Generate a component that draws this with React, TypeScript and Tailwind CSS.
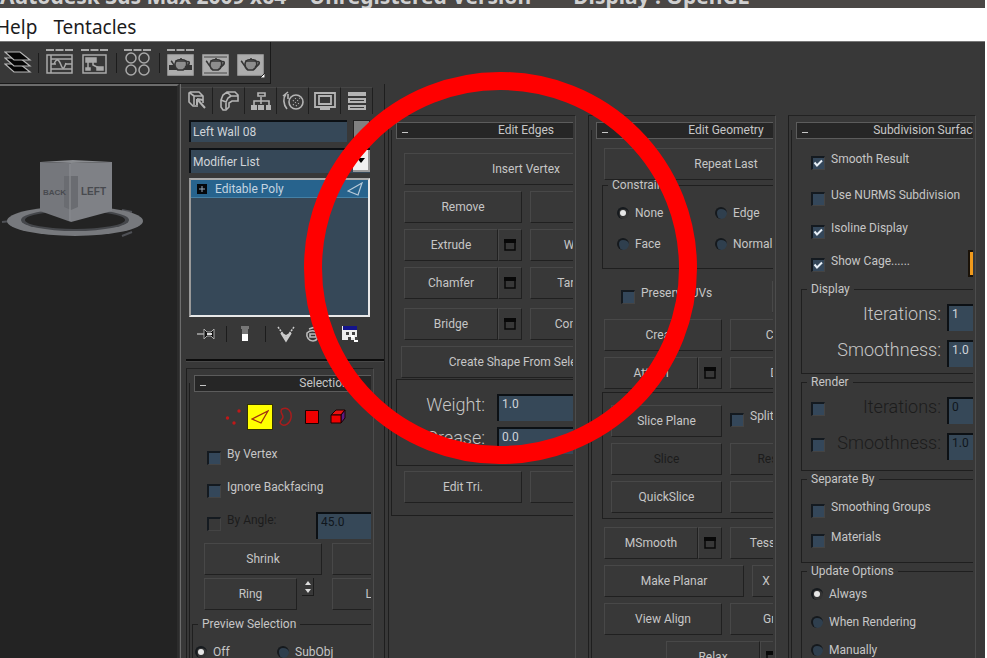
import React from 'react'
import clsx from 'clsx'

type Children = { children?: React.ReactNode }

/* ---------- basic controls ---------- */

function Btn({ children, className, disabled }: Children & { className?: string; disabled?: boolean }) {
    return (
        <button
            disabled={disabled}
            className={clsx(
                'h-8 min-w-0 whitespace-nowrap border border-t-[#484848] border-l-[#484848] border-r-[#202020] border-b-[#202020] text-center leading-4',
                disabled ? 'text-[#1c1c1c]' : 'text-[#c6c6c6]',
                className
            )}
        >
            {children}
        </button>
    )
}

function SettingsBtn() {
    return (
        <Btn className="flex w-6 shrink-0 items-center justify-center">
            <svg width="12" height="12" viewBox="0 0 12 12" aria-hidden="true">
                <path d="M1 1h10v10H1z" fill="none" stroke="#080808" strokeWidth="1.5" />
                <path d="M0 0h12v4H0z" fill="#080808" />
            </svg>
        </Btn>
    )
}

function WithSettings({ children }: Children) {
    return (
        <div className="flex">
            <Btn className="flex-1">{children}</Btn>
            <SettingsBtn />
        </div>
    )
}

function Row({ children }: Children) {
    return <div className="grid grid-cols-2 gap-2 px-2">{children}</div>
}

function Box({ label, checked, disabled }: { label?: string; checked?: boolean; disabled?: boolean }) {
    return (
        <label className={clsx('flex h-5 items-start gap-[6px] whitespace-nowrap leading-4', disabled ? 'text-[#1c1c1c]' : 'text-[#c6c6c6]')}>
            <span className="relative mt-[5px] h-[14px] w-[14px] shrink-0">
                <input
                    type="checkbox"
                    defaultChecked={checked}
                    disabled={disabled}
                    aria-label={label ? undefined : 'Use render value'}
                    className={clsx(
                        'peer block h-[14px] w-[14px] appearance-none border border-t-2 border-l-2 border-t-[#141a20] border-l-[#141a20] border-r-[#444] border-b-[#444]',
                        disabled && label ? 'bg-[#383838]' : 'bg-[#34475a]'
                    )}
                />
                <svg className="pointer-events-none absolute inset-0 hidden peer-checked:block" width="14" height="14" viewBox="0 0 14 14" aria-hidden="true">
                    <path d="M3.5 6.5l2.500 3 5-5" fill="none" stroke="#e8f0f8" strokeWidth="2" />
                </svg>
            </span>
            {label}
        </label>
    )
}

function Radio({ label, name, checked }: { label: string; name: string; checked?: boolean }) {
    return (
        <label className="flex h-5 items-center gap-[6px] whitespace-nowrap">
            <span className="relative h-3 w-3 shrink-0">
                <input
                    type="radio"
                    name={name}
                    defaultChecked={checked}
                    className="peer block h-3 w-3 appearance-none rounded-full border-t-2 border-l-2 border-t-[#15191d] border-l-[#15191d] bg-[#2f3f4e] checked:bg-[#333]"
                />
                <span className="pointer-events-none absolute top-[3px] left-[3px] hidden h-[6px] w-[6px] rounded-full bg-[#e6e6e6] peer-checked:block" />
            </span>
            {label}
        </label>
    )
}

function Field({ value, label, disabled, className }: { value: string; label: string; disabled?: boolean; className?: string }) {
    return (
        <input
            type="text"
            aria-label={label}
            defaultValue={value}
            disabled={disabled}
            className={clsx(
                'h-[27px] shrink-0 border-t-2 border-l-2 border-[#0c1014] bg-[#364858] pb-[10px] pl-[3px]',
                disabled ? 'text-[#10161c]' : 'text-[#d0d4d8]',
                className
            )}
        />
    )
}

function BigField({ label, value, disabled }: { label: string; value: string; disabled?: boolean }) {
    return (
        <div className="flex flex-1 items-start justify-end gap-[6px]">
            <span className={clsx('text-lg leading-5 font-light', disabled ? 'text-[#1c1c1c]' : 'text-[#c6c6c6]')}>{label}:</span>
            <Field label={label} value={value} disabled={disabled} className="w-20" />
        </div>
    )
}

/* ---------- panels ---------- */

function Group({ title, children, className }: Children & { title: string; className?: string }) {
    return (
        <fieldset className="border border-[#1f1f1f]">
            <legend className="ml-[5px] px-1 leading-4">{title}</legend>
            <div className={className}>{children}</div>
        </fieldset>
    )
}

function Rollout({ title, children, className }: Children & { title: string; className?: string }) {
    return (
        <section className="flex min-h-0 flex-1 flex-col border-t border-r border-l border-t-[#222] border-r-[#4c4c4c] border-l-[#1e1e1e]">
            <div className="mr-[2px] flex flex-col overflow-hidden">
                <div className="mt-[14px] ml-[2px] flex flex-col border-b border-l border-[#1e1e1e]">
                    <div className="-mt-2 ml-1 w-[260px]">
                        <h2 className="relative h-[17px] border border-[#5c5c5c] bg-[#262626] text-center leading-[15px]">
                            <button aria-label="Collapse" className="absolute top-[9px] left-[5px] h-px w-[6px] bg-[#c6c6c6]" />
                            {title}
                        </h2>
                        <div className={className}>{children}</div>
                    </div>
                </div>
            </div>
        </section>
    )
}

function Column({ children }: Children) {
    return <div className="flex min-w-0 flex-col pt-[31px] pr-[9px] pl-[3px]">{children}</div>
}

/* ---------- toolbar drawings ---------- */

function Tool({ label, children }: Children & { label: string }) {
    return (
        <button aria-label={label} className="shrink-0">
            <svg width="28" height="30" viewBox="0 0 28 30" fill="none" stroke="#a9a9a9" strokeWidth="1.5">
                {children}
            </svg>
        </button>
    )
}

const Sep = () => <span className="h-5 w-px shrink-0 bg-[#1c1c1c]" />
const Dashes = () => <path d="M0 2h8M9.500 2h8M19 2h8" strokeWidth="2" />

function Teapot() {
    return (
        <g stroke="#353535" fill="#8d8d8d" strokeWidth="1.6">
            <path d="M9 13h10c2 4 0 7-3 9h-5c-3-2-4-5-2-9z" />
            <path d="M8 18c-2-1-2-4-4-5M19 14c5-2 4 3-1 5M9 13c2-2 8-2 10 0M14 11v-1" fill="none" />
        </g>
    )
}

function Toolbar() {
    return (
        <div className="flex h-[43px] border-t border-[#777]">
            <div className="flex items-center border-r border-b border-[#1a1a1a] pr-[5px] pl-1">
                <Tool label="Layers">
                    <g fill="#050505" stroke="#b8b8b8" strokeWidth="1.2">
                        <path d="M1 16h15l10 8H10z" />
                        <path d="M1 10h15l10 8H10z" />
                        <path d="M1 4h15l10 8H10z" />
                    </g>
                </Tool>
                <div className="flex items-center gap-[7px] pl-[6px]">
                    <Sep />
                    <Tool label="Curve Editor">
                        <Dashes />
                        <path d="M1 7h25v18H1zM5 7v18M5 11h21M5 16h5M19 16h7M5 21h21" />
                        <path d="M8 16c3-7 5-4 7 1s3 4 5-2" />
                    </Tool>
                    <Tool label="Schematic View">
                        <Dashes />
                        <path d="M2 7h23v18H2z" />
                        <path d="M5 10h10v4H5zM5 20h4v2H5zM16 19h6v3h-6z" fill="#a9a9a9" />
                        <path d="M12 14v3l6 3M7 14v6" />
                    </Tool>
                    <Sep />
                    <Tool label="Material Editor">
                        <Dashes />
                        <circle cx="7" cy="10" r="5" />
                        <circle cx="20" cy="10" r="5" />
                        <circle cx="7" cy="22" r="5" />
                        <circle cx="20" cy="22" r="5" />
                    </Tool>
                    <Sep />
                    <Tool label="Render Setup">
                        <Dashes />
                        <path d="M1 7h25v20H1z" fill="#adadad" />
                        <path d="M2 17h5l4 4h6l4-4h4v5H2z" fill="#333" stroke="none" />
                        <Teapot />
                    </Tool>
                    <Tool label="Rendered Frame">
                        <path d="M1 7h25v20H1z" fill="#adadad" />
                        <path d="M2 9h23M2 25h23" stroke="#444" strokeWidth="1" />
                        <Teapot />
                    </Tool>
                    <Tool label="Quick Render">
                        <path d="M1 7h25v20H1z" fill="#adadad" />
                        <Teapot />
                        <path d="M28 25v5h-5z" fill="#fff" stroke="#222" strokeWidth="1" />
                    </Tool>
                </div>
            </div>
        </div>
    )
}

/* ---------- viewport ---------- */

function ViewCube() {
    return (
        <svg className="mt-[69px]" width="150" height="86" viewBox="0 0 150 86">
            <path d="M2 67l18-2M122 81l10-4M122 55l10 2" stroke="#4f5156" strokeWidth="2" />
            <ellipse cx="75" cy="66" rx="68" ry="15" fill="#77797d" />
            <ellipse cx="75" cy="65" rx="54" ry="11" fill="#45474b" />
            <ellipse cx="75" cy="65" rx="50" ry="9" fill="#232323" />
            <path d="M40 7l33-2 39 2-41 1z" fill="#8a8c90" />
            <path d="M40 7l31 1v59l-31-11z" fill="#75777c" />
            <path d="M71 8l41-1v49l-41 11z" fill="#7f8186" />
            <path d="M64 21h14v31l-7 3-7-3z" fill="#6a6c71" />
            <path d="M70 9v57" stroke="#929498" />
            <g fill="#484a4f" fontWeight="700" fontFamily="Liberation Sans, sans-serif">
                <text x="43" y="40" fontSize="8">BACK</text>
                <text x="81" y="40" fontSize="10">LEFT</text>
            </g>
        </svg>
    )
}

/* ---------- command panel ---------- */

function Tab({ label, children }: Children & { label: string }) {
    return (
        <button aria-label={label} className="flex w-8 items-center justify-center border-t border-r border-t-[#464646] border-r-[#1f1f1f]">
            <svg width="22" height="22" viewBox="0 0 22 22" fill="none" stroke="#b4b4b4" strokeWidth="2">
                {children}
            </svg>
        </button>
    )
}

function CommandPanel() {
    return (
        <div className="flex min-w-0 flex-col border-r border-l border-r-[#1e1e1e] border-l-[#6c6c6c] pt-[3px]">
            <div className="flex h-[27px]">
                <Tab label="Create">
                    <path d="M4 2h9l4 4v7M4 2L3 3v9l4 4h5M8 6h9M8 6v9M4 3l4 3" strokeWidth="1.6" />
                    <path d="M11 9l8 9M11 9v6M11 9l6 1" />
                </Tab>
                <Tab label="Modify">
                    <path d="M3 10l2-5 4-3h8l3 3v6h-6l-3 2v4l-3 3H5l-2-3zM9 2l4 4h7M3 10l5 2 2-4 3-2M8 12v7" strokeWidth="1.6" />
                </Tab>
                <Tab label="Hierarchy">
                    <path d="M8 3h7v3H8zM11 7v7M4 15v-4h15v4" strokeWidth="1.6" />
                    <path d="M2 16h4v3H2zM9 16h4v3H9zM17 16h3v3h-3z" fill="#b4b4b4" />
                </Tab>
                <Tab label="Motion">
                    <circle cx="14" cy="12" r="7" strokeWidth="1.6" />
                    <path d="M5 19C1 14 1 8 4 4M1 6l5-4M6 4v5" strokeWidth="1.6" />
                    <path d="M11 15l7-7M11 11l3-3M14 16l4-4" strokeWidth="1.2" strokeDasharray="1 2" />
                </Tab>
                <Tab label="Display">
                    <path d="M1 3h20v14H1zM5 6h12v8H5zM6 19h10" strokeWidth="1.8" />
                </Tab>
                <Tab label="Utilities">
                    <path d="M2 4h18" strokeWidth="4" />
                    <path d="M3 9h16v3H3zM3 16h16v3H3z" />
                </Tab>
            </div>

            <div className="mr-[14px] ml-2 flex flex-col">
                <div className="mt-[6px] flex h-[22px] gap-[6px]">
                    <input
                        type="text"
                        aria-label="Object name"
                        defaultValue="Left Wall 08"
                        className="min-w-0 flex-1 border-t-2 border-l-2 border-[#0c1014] bg-[#364858] pl-[2px] text-[#d0d4d8]"
                    />
                    <button aria-label="Object color" className="w-[17px] border border-[#222] bg-[#808080]" />
                </div>
                <div className="relative mt-[6px] flex">
                    <select
                        aria-label="Modifier List"
                        className="h-[25px] w-full appearance-none border-t-2 border-l-2 border-[#0c1014] bg-[#364858] pl-[2px] text-[#d0d4d8]"
                    >
                        <option>Modifier List</option>
                    </select>
                    <span className="pointer-events-none absolute top-[2px] right-0 flex h-[22px] w-[17px] items-center justify-center border-r-2 border-b-2 border-[#999] bg-[#f0f0f0]">
                        <svg width="8" height="5" viewBox="0 0 8 5" aria-hidden="true">
                            <path d="M0 0h8L4 5z" fill="#000" />
                        </svg>
                    </span>
                </div>
                <div className="mt-[5px] h-[139px] border-2 border-t-[#aaa] border-r-[#e8e8e8] border-b-[#e8e8e8] border-l-[#999] bg-[#364858]">
                    <div className="flex h-[18px] items-center border-b border-[#4580a5] bg-[#27638d] pl-[6px] text-[#c4d4e0]">
                        <svg width="10" height="10" viewBox="0 0 10 10" aria-hidden="true">
                            <path d="M0 0h10v10H0z" fill="#05080c" />
                            <path d="M5 2v6M2 5h6" stroke="#9ab" />
                        </svg>
                        <span className="flex-1 pl-2">Editable Poly</span>
                        <svg className="mr-1" width="17" height="14" viewBox="0 0 17 14" aria-hidden="true">
                            <path d="M1 9L15 1l-4 12z" fill="none" stroke="#b8cad8" strokeWidth="1.2" />
                        </svg>
                    </div>
                </div>
            </div>

            <div className="mt-1 flex h-[26px] items-center pl-4">
                <button aria-label="Pin Stack">
                    <svg width="18" height="14" viewBox="0 0 18 14">
                        <path d="M0 7h8" stroke="#aaa" strokeWidth="1.5" />
                        <path d="M7 2v10l3-3h4l3 3V2l-3 3h-4z" fill="#111" stroke="#aaa" />
                        <path d="M10 7h5" stroke="#ddd" strokeWidth="2" />
                    </svg>
                </button>
                <span className="ml-[11px] h-4 w-px bg-[#1c1c1c]" />
                <button aria-label="Show End Result" className="ml-[13px]">
                    <svg width="10" height="18" viewBox="0 0 10 18">
                        <path d="M1 1h8v3H8v5H2V4H1z" fill="#777" />
                        <path d="M2 9h6v7H2z" fill="#fff" />
                    </svg>
                </button>
                <span className="ml-[15px] h-4 w-px bg-[#1c1c1c]" />
                <button aria-label="Make Unique" className="ml-[11px]">
                    <svg width="18" height="18" viewBox="0 0 18 18" fill="none" stroke="#ccc" strokeWidth="1.5">
                        <path d="M1 2l5 7M17 2l-5 7" strokeDasharray="2 1" />
                        <path d="M4 8l5 8 5-8-5 3zM6 9l3 5 3-5" />
                    </svg>
                </button>
                <button aria-label="Remove Modifier" className="ml-[10px]">
                    <svg width="16" height="18" viewBox="0 0 16 18" fill="none" stroke="#bbb" strokeWidth="1.6">
                        <path d="M2 8c3-3 8-3 11 0 1 4-1 8-5 8s-7-4-6-8zM4 4l6-2 2 2M5 9h6v3H5z" />
                    </svg>
                </button>
                <button aria-label="Configure Modifier Sets" className="ml-[20px]">
                    <svg width="18" height="18" viewBox="0 0 18 18">
                        <path d="M1 1h15v14H1z" fill="#eee" />
                        <path d="M2 1h14v4H2z" fill="#14148c" />
                        <path d="M5 7h3v3H5zM11 7h3v3h-3zM7 12h3v3H7zM14 12h3v3h-3z" fill="#444" />
                        <path d="M10 10h3v3h-3zM13 15h4v2h-4z" fill="#fff" />
                    </svg>
                </button>
            </div>

            <div className="mt-[12px] ml-[5px] h-[3px] shrink-0 border-b border-[#484848] bg-[#0c0c0c]" />

            <div className="mt-[6px] mr-[10px] ml-[5px] flex min-h-0 flex-1 flex-col">
                <Rollout title="Selection" className="pt-3">
                    <div className="flex h-[26px] pl-[27px]">
                        <button aria-label="Vertex" className="flex w-[26px] items-center justify-center">
                            <svg width="18" height="18" viewBox="0 0 18 18" fill="#c01818">
                                <circle cx="2.500" cy="10" r="1.700" />
                                <circle cx="9" cy="15" r="1.700" />
                                <circle cx="14" cy="3" r="1.700" />
                            </svg>
                        </button>
                        <button aria-label="Edge" className="flex w-[26px] items-center justify-center border border-[#333300] bg-[#ffff00]">
                            <svg width="18" height="16" viewBox="0 0 18 16">
                                <path d="M1 10L17 2l-7 12z" fill="none" stroke="#a03010" strokeWidth="1.3" />
                            </svg>
                        </button>
                        <button aria-label="Border" className="flex w-[26px] items-center justify-center">
                            <svg width="14" height="20" viewBox="0 0 14 20">
                                <path d="M3 2C9-1 13 5 12 11s-7 9-10 6 2-4 2-7-4-5-1-8z" fill="none" stroke="#a81c1c" strokeWidth="1.5" />
                            </svg>
                        </button>
                        <button aria-label="Polygon" className="flex w-[26px] items-center justify-center">
                            <svg width="14" height="14" viewBox="0 0 14 14">
                                <path d="M.5.5h13v13H.5z" fill="#f00000" stroke="#1a0000" />
                            </svg>
                        </button>
                        <button aria-label="Element" className="flex w-[26px] items-center justify-center">
                            <svg width="16" height="16" viewBox="0 0 16 16" stroke="#1a0000">
                                <path d="M1 6l5-5h9l-4 5z" fill="#e81010" />
                                <path d="M11 6l4-5v8l-4 5z" fill="#5a1a80" />
                                <path d="M1 6h10v8H1z" fill="#f00000" />
                            </svg>
                        </button>
                    </div>
                    <div className="mt-4 flex flex-col gap-[13px] pl-[13px]">
                        <Box label="By Vertex" />
                        <Box label="Ignore Backfacing" />
                        <div className="flex">
                            <div className="w-[109px]">
                                <Box label="By Angle:" disabled />
                            </div>
                            <Field label="Angle" value="45.0" disabled className="w-20" />
                        </div>
                    </div>
                    <div className="mt-1 grid grid-cols-[118px_118px] gap-x-[10px] gap-y-[3px] pl-[10px]">
                        <Btn>Shrink</Btn>
                        <Btn>Grow</Btn>
                        <div className="flex items-start gap-[5px]">
                            <Btn className="flex-1">Ring</Btn>
                            <button aria-label="Shift ring" className="mr-2 flex h-[18px] w-3 items-center justify-center border-r border-b border-[#1c1c1c]">
                                <svg width="8" height="12" viewBox="0 0 8 12" fill="#ddd">
                                    <path d="M4 0l3 4H1zM4 12l3-4H1z" />
                                </svg>
                            </button>
                        </div>
                        <Btn className="mr-6">Loop</Btn>
                    </div>
                    <div className="mt-[6px] -ml-[2px]">
                        <Group title="Preview Selection" className="grid grid-cols-[82px_82px] pt-[10px] pb-3 pl-[2px]">
                            <Radio name="preview" label="Off" checked />
                            <Radio name="preview" label="SubObj" />
                        </Group>
                    </div>
                </Rollout>
            </div>
        </div>
    )
}

/* ---------- rollouts ---------- */

function EditEdges() {
    return (
        <Column>
            <Rollout title="Edit Edges" className="pt-[14px] pb-3">
                <div className="flex flex-col gap-[6px]">
                    <Btn className="mx-2">Insert Vertex</Btn>
                    <Row>
                        <Btn>Remove</Btn>
                        <Btn>Split</Btn>
                    </Row>
                    <Row>
                        <WithSettings>Extrude</WithSettings>
                        <WithSettings>Weld</WithSettings>
                    </Row>
                    <Row>
                        <WithSettings>Chamfer</WithSettings>
                        <Btn>Target Weld</Btn>
                    </Row>
                </div>
                <div className="mt-[9px] flex flex-col gap-[6px]">
                    <Row>
                        <WithSettings>Bridge</WithSettings>
                        <WithSettings>Connect</WithSettings>
                    </Row>
                    <Btn className="mx-[5px]">Create Shape From Selection</Btn>
                </div>
                <div className="mt-px flex flex-col gap-[6px] border border-[#1f1f1f] pt-[14px] pb-[11px]">
                    {[
                        ['Weight', '1.0'],
                        ['Crease', '0.0'],
                    ].map(([label, value]) => (
                        <div key={label} className="flex items-start gap-3">
                            <span className="w-[88px] text-right text-lg leading-[22px] font-light">{label}:</span>
                            <Field label={label} value={value} className="w-[110px]" />
                        </div>
                    ))}
                </div>
                <div className="mt-[5px]">
                    <Row>
                        <Btn>Edit Tri.</Btn>
                        <Btn>Turn</Btn>
                    </Row>
                </div>
            </Rollout>
        </Column>
    )
}

function EditGeometry() {
    return (
        <Column>
            <Rollout title="Edit Geometry" className="flex flex-col pt-[9px]">
                <Btn className="mx-2">Repeat Last</Btn>
                <div className="-mt-[3px] ml-[6px]">
                    <Group title="Constraints" className="grid grid-cols-[98px_98px] gap-y-[11px] pt-[10px] pb-[14px] pl-[14px]">
                        <Radio name="constraints" label="None" checked />
                        <Radio name="constraints" label="Edge" />
                        <Radio name="constraints" label="Face" />
                        <Radio name="constraints" label="Normal" />
                    </Group>
                </div>
                <div className="mt-3 flex justify-between pr-[60px] pl-[25px]">
                    <div className="pt-1">
                        <Box label="Preserve UVs" />
                    </div>
                    <SettingsBtn />
                </div>
                <div className="mt-[6px] flex flex-col gap-[6px]">
                    <Row>
                        <Btn>Create</Btn>
                        <Btn>Collapse</Btn>
                    </Row>
                    <Row>
                        <WithSettings>Attach</WithSettings>
                        <Btn>Detach</Btn>
                    </Row>
                </div>
                <div className="mt-[3px] ml-[6px] grid grid-cols-[111px_118px] gap-x-2 gap-y-[6px] border border-[#1f1f1f] pt-3 pb-[5px] pl-2">
                    <Btn>Slice Plane</Btn>
                    <div className="pt-[3px]">
                        <Box label="Split" />
                    </div>
                    <Btn disabled>Slice</Btn>
                    <Btn disabled>Reset Plane</Btn>
                    <Btn>QuickSlice</Btn>
                    <Btn>Cut</Btn>
                </div>
                <div className="mt-2 flex flex-col gap-[6px]">
                    <Row>
                        <WithSettings>MSmooth</WithSettings>
                        <WithSettings>Tessellate</WithSettings>
                    </Row>
                    <div className="flex gap-2 px-2">
                        <Btn className="w-[140px]">Make Planar</Btn>
                        <Btn className="w-7">X</Btn>
                    </div>
                    <Row>
                        <Btn>View Align</Btn>
                        <Btn>Grid Align</Btn>
                    </Row>
                    <div className="flex pl-[70px]">
                        <Btn className="w-[94px]">Relax</Btn>
                        <SettingsBtn />
                    </div>
                </div>
            </Rollout>
        </Column>
    )
}

function SubdivisionSurface() {
    return (
        <Column>
            <Rollout title="Subdivision Surface" className="flex flex-col pt-3">
                <div className="flex flex-col gap-[13px] pl-[15px]">
                    <div className="pb-[3px]">
                        <Box label="Smooth Result" checked />
                    </div>
                    <Box label="Use NURMS Subdivision" />
                    <Box label="Isoline Display" checked />
                    <div className="flex h-5 items-center justify-between pr-[60px]">
                        <Box label="Show Cage......" checked />
                        <button aria-label="Cage color" className="h-[27px] w-7 border-2 border-[#1a1208] bg-[#f09a1c]" />
                    </div>
                </div>
                <div className="mt-2 ml-[5px] flex flex-col">
                    <Group title="Display" className="flex flex-col gap-[9px] pt-[7px] pr-[28px] pb-[6px]">
                        <BigField label="Iterations" value="1" />
                        <BigField label="Smoothness" value="1.0" />
                    </Group>
                    <Group title="Render" className="flex flex-col gap-[9px] pt-[7px] pr-[28px] pb-[10px] pl-[9px]">
                        <div className="flex items-start">
                            <Box disabled />
                            <BigField label="Iterations" value="0" disabled />
                        </div>
                        <div className="flex items-start">
                            <Box disabled />
                            <BigField label="Smoothness" value="1.0" disabled />
                        </div>
                    </Group>
                    <Group title="Separate By" className="flex flex-col gap-[10px] pt-3 pb-[13px] pl-[9px]">
                        <Box label="Smoothing Groups" />
                        <Box label="Materials" />
                    </Group>
                    <Group title="Update Options" className="flex flex-col gap-2 pt-[5px] pb-3 pl-[9px]">
                        <Radio name="update" label="Always" checked />
                        <Radio name="update" label="When Rendering" />
                        <Radio name="update" label="Manually" />
                    </Group>
                </div>
            </Rollout>
        </Column>
    )
}

function App() {
    return (
        <div className="relative flex h-screen flex-col overflow-hidden border-r-2 border-white bg-[#383838] font-['Roboto',sans-serif] text-xs text-[#c6c6c6]">
            <header className="flex h-2 shrink-0 items-end gap-[30px] overflow-hidden bg-[#4a4745] font-['Noto_Sans',sans-serif] text-[21px] leading-6 font-bold whitespace-pre text-[#d0d0d0]">
                <span>Autodesk 3ds Max 2009 x64  - Unregistered Version</span>
                <span>- Display : OpenGL</span>
            </header>
            <nav className="flex h-[33px] shrink-0 items-center gap-4 bg-white pt-1 font-['Noto_Sans',sans-serif] text-[19px] leading-6 text-[#1c1c1c]">
                <a href="#help" className="-ml-1">Help</a>
                <a href="#tentacles">Tentacles</a>
            </nav>
            <Toolbar />
            <main className="grid min-h-0 flex-1 grid-cols-[180px_205px_repeat(3,minmax(0,1fr))] grid-rows-[minmax(0,1fr)] overflow-hidden">
                <div className="mr-px border-t-2 border-r-2 border-t-[#6c6c6c] border-r-[#2c2c2c] bg-[#232323]">
                    <ViewCube />
                </div>
                <CommandPanel />
                <EditEdges />
                <EditGeometry />
                <SubdivisionSurface />
            </main>

            {/* Highlight ring */}
            <div className="pointer-events-none absolute top-[72px] left-[304px] h-[392px] w-[393px] rounded-full border-[18px] border-[#ff0000]" />
        </div>
    )
}

export default App
